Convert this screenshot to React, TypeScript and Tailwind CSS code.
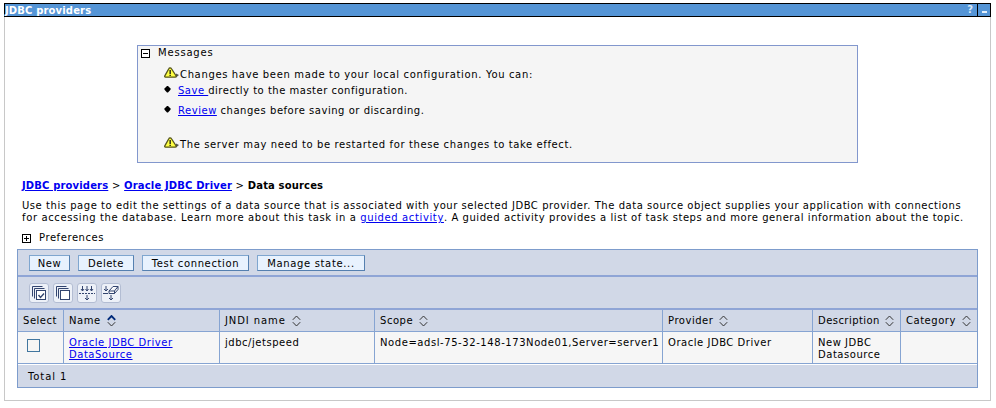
import React from 'react';

function Warning() {
  return (
    <svg className="mb-[2px] h-[12px] w-[15px] shrink-0" viewBox="0 0 15 12">
      <path d="M12 6.5L15 8L12 10.5Z" fill="#555" />
      <path d="M6 .8Q7 .8 7.5 1.8L12 8.7Q12.6 10 11.2 10.2H1.5Q.3 10 .8 8.9L4.8 1.8Q5.2 .8 6 .8Z" fill="#ffff42" stroke="#55551c" strokeWidth="1.3" />
      <path d="M5.5 3h1.3v4H5.5zM5.5 7.7h1.3v1.3H5.5z" fill="#111" />
    </svg>
  );
}

function Toggle({ plus = false }: { plus?: boolean }) {
  return (
    <svg className="size-[9px] shrink-0" viewBox="0 0 9 9" shapeRendering="crispEdges">
      <rect x=".5" y=".5" width="8" height="8" fill="#fff" stroke="#000" />
      <path d={plus ? 'M2 4.5H7M4.5 2V7' : 'M2 4.5H7'} stroke="#000" />
    </svg>
  );
}

function Diamond() {
  return (
    <svg className="mb-[3px] h-[7px] w-[7px] shrink-0" viewBox="0 0 7 7">
      <path d="M3 0H4L6.5 2.5V3.8L4 6.5H3L.5 3.8V2.5Z" fill="#000" />
    </svg>
  );
}

function Sort({ active = false }: { active?: boolean }) {
  return (
    <svg className="h-[12px] w-[9px] shrink-0" viewBox="0 0 9 12" fill="none">
      <path d="M.8 4.8L4.5 1L8.2 4.8" stroke={active ? '#002a7a' : '#333'} strokeWidth={active ? 1.9 : 1} />
      <path d="M.8 7.2L4.5 11L8.2 7.2" stroke="#333" />
    </svg>
  );
}

function Tool({ children }: { children: React.ReactNode }) {
  return (
    <button className="size-[20px] rounded-[3px] border border-[#b3bdd3] bg-[#edf1f8]">
      <svg className="size-[18px]" viewBox="0 0 18 18" fill="none" stroke="#33456f">
        {children}
      </svg>
    </button>
  );
}

function Action({ children, className }: { children: React.ReactNode; className: string }) {
  return (
    <button className={`h-[16px] border border-[#5580b0] border-t-[#7fa6cf] border-l-[#7fa6cf] bg-[#e8f2fe] pt-px text-center leading-[14px] whitespace-nowrap ${className}`}>
      {children}
    </button>
  );
}

const link = 'text-[#0000f0] underline';

export default function App() {
  return (
    <div className="h-[408px] w-[996px] overflow-hidden bg-white pt-[3px] pl-[4px] font-['DejaVu_Sans',sans-serif] text-[10px] leading-[12px] tracking-[0.53px] text-black">
      <header className="flex h-[14px] w-[987px] border border-black bg-[#5595d6] text-white">
        <h1 className="flex-1 pt-px font-bold tracking-[0.15px]">JDBC providers</h1>
        <span className="w-[13px] text-center font-bold text-[#dce9f7]">?</span>
        <span className="flex w-[13px] items-end justify-center border-l border-black pb-[3px]">
          <i className="h-[2px] w-[5px] bg-[#e4effa]" />
        </span>
      </header>
      <main className="h-[384px] w-[987px] border-x border-b border-[#c8c8c8] pt-[28px] pl-[12px]">
        <section className="ml-[120px] h-[118px] w-[721px] border border-[#8297cd] bg-[#f5f5f5]">
          <div className="flex h-[15px] items-center gap-[8px] pl-[3px]">
            <Toggle />
            <span className="-mt-px tracking-[0.8px]">Messages</span>
          </div>
          <div className="mt-[5px] flex h-[15px] items-center gap-px pl-[26px]">
            <Warning />
            <span className="pt-[2px] tracking-[0.65px] whitespace-nowrap">Changes have been made to your local configuration. You can:</span>
          </div>
          <div className="mt-[3px] flex h-[14px] items-center gap-[7px] pl-[26px]">
            <Diamond />
            <span className="tracking-[0.5px] whitespace-pre"><a className={link}>Save </a>directly to the master configuration.</span>
          </div>
          <div className="mt-[6px] flex h-[14px] items-center gap-[7px] pl-[26px]">
            <Diamond />
            <span className="tracking-[0.53px]"><a className={link}>Review</a> changes before saving or discarding.</span>
          </div>
          <div className="mt-[18px] flex h-[15px] items-center gap-px pl-[26px]">
            <Warning />
            <span className="pt-[2px] tracking-[0.61px]">The server may need to be restarted for these changes to take effect.</span>
          </div>
        </section>
        <nav className="mt-[17px] ml-[5px] font-bold tracking-[0.15px]">
          <a className={link}>JDBC providers</a> <span className="font-normal">&gt;</span> <a className={link}>Oracle JDBC Driver</a> <span className="font-normal">&gt;</span> <span>Data sources</span>
        </nav>
        <p className="mt-[8px] ml-[5px] whitespace-nowrap">
          <span className="tracking-[0.547px]">Use this page to edit the settings of a data source that is associated with your selected JDBC provider. The data source object supplies your application with connections</span><br />
          <span className="tracking-[0.62px]">for accessing the database. Learn more about this task in a <a className={link}>guided activity</a></span><span className="tracking-[0.56px]">. A guided activity provides a list of task steps and more general information about the topic.</span>
        </p>
        <div className="mt-[7px] ml-[5px] flex h-[14px] items-center gap-[8px]">
          <Toggle plus />
          <span className="tracking-[0.57px]">Preferences</span>
        </div>
        <section className="mt-[4px] w-[961px] border border-[#7d9ccc] bg-[#d1d8e7]">
          <div className="flex h-[25px] gap-[8px] pt-[5px] pl-[11px]">
            <Action className="w-[41px]">New</Action>
            <Action className="w-[56px]">Delete</Action>
            <Action className="w-[107px] tracking-[0.63px]">Test connection</Action>
            <Action className="w-[108px] tracking-[0.65px]">Manage state...</Action>
          </div>
          <div className="flex h-[35px] gap-[4px] border-y-2 border-[#8fa5d6] pt-[6px] pl-[11px]">
            <Tool>
              <path d="M2.5 12.5V2.5H12.5M4.5 14.5V4.5H14.5" /><rect x="6.5" y="6.5" width="9" height="9" fill="#fff" /><path d="M8.5 11L10.5 13.5L14 9.5" strokeWidth="1.4" />
            </Tool>
            <Tool>
              <path d="M2.5 12.5V2.5H12.5M4.5 14.5V4.5H14.5" /><rect x="6.5" y="6.5" width="9" height="9" fill="#fff" />
            </Tool>
            <Tool>
              <path d="M4.5 2V7M9 2V7M13.5 2V7M3 5L4.5 7L6 5M7.5 5L9 7L10.5 5M12 5L13.5 7L15 5M9 11V16M7 14L9 16L11 14" /><path d="M1 9.5H17" strokeDasharray="2 1" />
            </Tool>
            <Tool>
              <path d="M4 2V7M2 5L4 7L6 5M9 11V16M7 14L9 16L11 14M1 9.5H6" /><path d="M7 7L11 2.5H16L12.5 7ZM7 7V9.5H12.5L16 5.5V2.5M12.5 7V9.5" fill="#fff" />
            </Tool>
          </div>
          <table className="w-[959px] table-fixed border-separate border-spacing-0 text-left">
            <colgroup>
              <col className="w-[46px]" /><col className="w-[156px]" /><col className="w-[155px]" /><col className="w-[288px]" /><col className="w-[150px]" /><col className="w-[88px]" /><col className="w-[76px]" />
            </colgroup>
            <thead>
              <tr className="h-[22px] [&>th]:border-b [&>th]:border-[#86a4d2] [&>th]:p-0 [&>th]:pt-px [&>th]:pl-[5px] [&>th]:font-normal [&>th:not(:last-child)]:border-r">
                <th>Select</th>
                <th><span className="flex items-center gap-[6px]">Name<Sort active /></span></th>
                <th><span className="flex items-center gap-[6px] tracking-[0.9px]">JNDI name<Sort /></span></th>
                <th><span className="flex items-center gap-[6px]">Scope<Sort /></span></th>
                <th><span className="flex items-center gap-[6px]">Provider<Sort /></span></th>
                <th><span className="flex items-center gap-[5px] tracking-[0.45px]">Description<Sort /></span></th>
                <th><span className="flex items-center gap-[6px]">Category<Sort /></span></th>
              </tr>
            </thead>
            <tbody className="bg-[#f6f6f6]">
              <tr className="h-[32px] [&>td]:border-b [&>td]:border-[#86a4d2] [&>td]:p-0 [&>td]:pt-[5px] [&>td]:pl-[5px] [&>td]:align-top [&>td]:whitespace-nowrap [&>td:not(:last-child)]:border-r">
                <td><input type="checkbox" className="mt-[2px] ml-[4px] block size-[13px] appearance-none border border-[#41769f] bg-[#f6f6f4]" /></td>
                <td><a className={link}>Oracle JDBC Driver<br />DataSource</a></td>
                <td>jdbc/jetspeed</td>
                <td className="tracking-[0.57px]">Node=adsl-75-32-148-173Node01,Server=server1</td>
                <td>Oracle JDBC Driver</td>
                <td>New JDBC<br />Datasource</td>
                <td />
              </tr>
            </tbody>
          </table>
          <footer className="h-[23px] border-t border-white pt-[6px] pl-[10px] tracking-[0.9px]">Total 1</footer>
        </section>
      </main>
    </div>
  );
}
